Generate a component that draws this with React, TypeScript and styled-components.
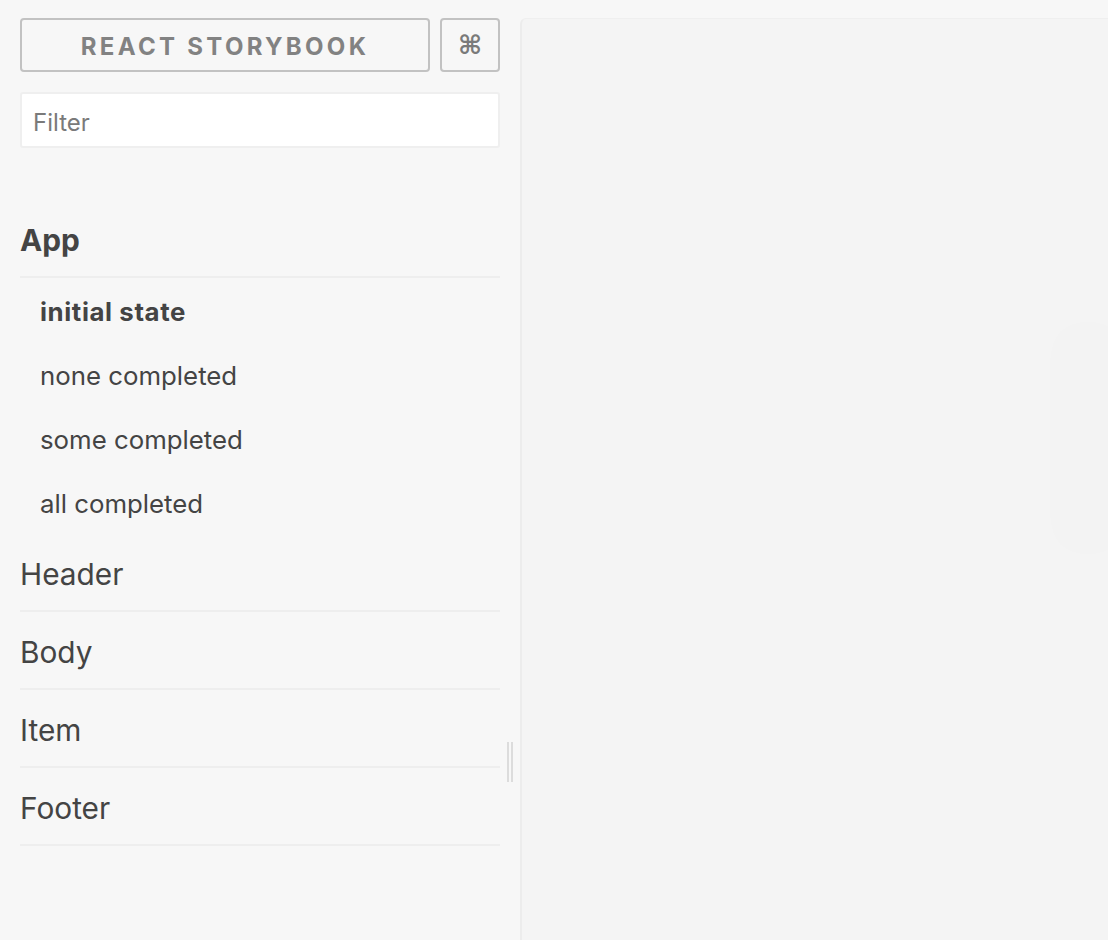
import React from "react";
import styled, { createGlobalStyle } from "styled-components";

const Global = createGlobalStyle`
  html, body { margin: 0; padding: 0; background: #f7f7f7; }
  body { font-family: Inter, "Noto Sans", "Liberation Sans", sans-serif; color: #444; }
  * { box-sizing: border-box; }
`;

const Page = styled.div`
  display: flex;
  height: 940px;
  overflow: hidden;
  background: #f7f7f7;
`;

const Sidebar = styled.aside`
  width: 500px;
  flex: none;
  padding: 18px 0 0 20px;
  display: flex;
  flex-direction: column;
`;

const HeaderRow = styled.div`
  display: flex;
  gap: 10px;
  height: 54px;
`;

const TitleButton = styled.a`
  flex: 1;
  display: flex;
  align-items: center;
  justify-content: center;
  padding-top: 2px;
  border: 2px solid #c2c2c2;
  border-radius: 4px;
  color: #828282;
  font-weight: 700;
  font-size: 24px;
  letter-spacing: 3.3px;
  text-transform: uppercase;
  text-decoration: none;
`;

const ShortcutButton = styled.button`
  width: 60px;
  flex: none;
  border: 2px solid #c2c2c2;
  border-radius: 4px;
  background: transparent;
  color: #7a7a7a;
  font-size: 26px;
  font-weight: 700;
  font-family: "DejaVu Sans", sans-serif;
  padding: 0;
`;

const FilterInput = styled.input`
  margin-top: 20px;
  height: 56px;
  width: 100%;
  border: 2px solid #efefef;
  border-radius: 3px;
  background: #fff;
  padding: 4px 12px 0 11px;
  font-family: inherit;
  font-size: 24px;
  color: #444;
  outline: none;
  &::placeholder { color: #7a7a7a; }
`;

const KindList = styled.ul`
  list-style: none;
  margin: 52px 0 0;
  padding: 0;
`;

const KindTitle = styled.div<{ $active?: boolean }>`
  height: 78px;
  display: flex;
  align-items: center;
  padding-top: 3px;
  border-bottom: 2px solid #eeeeee;
  font-size: 29.8px;
  font-weight: ${(p) => (p.$active ? 700 : 400)};
  color: #444;
`;

const StoryList = styled.ul`
  list-style: none;
  margin: 0;
  padding: 0;
`;

const Story = styled.li<{ $active?: boolean }>`
  height: 64px;
  display: flex;
  align-items: center;
  padding: 2px 0 0 20px;
  font-size: 25.8px;
  font-weight: ${(p) => (p.$active ? 700 : 400)};
  letter-spacing: ${(p) => (p.$active ? "0.6px" : "0")};
  color: #444;
`;

const Gutter = styled.div`
  width: 20px;
  flex: none;
  display: flex;
  justify-content: center;
  padding: 742px 0 0 0;
`;

const Resizer = styled.div`
  width: 6px;
  height: 40px;
  border-left: 2px solid #dcdcdc;
  border-right: 2px solid #dcdcdc;
`;

const Preview = styled.main`
  flex: 1;
  margin-top: 18px;
  background: #f4f4f4;
  border-left: 2px solid #ececec;
  border-top: 1px solid #efefef;
  border-radius: 6px 0 0 0;
  display: flex;
  justify-content: flex-end;
  align-items: flex-start;
  overflow: hidden;
  padding-top: 312px;
`;

const PreviewCard = styled.div`
  width: 56px;
  height: 214px;
  margin-right: -8px;
  background: #f3f3f3;
  box-shadow: 0 0 40px 10px rgba(0, 0, 0, 0.006);
`;

const kinds = [
  { name: "App", stories: ["initial state", "none completed", "some completed", "all completed"] },
  { name: "Header", stories: [] },
  { name: "Body", stories: [] },
  { name: "Item", stories: [] },
  { name: "Footer", stories: [] },
];

export default function App() {
  return (
    <Page>
      <Global />
      <Sidebar>
        <HeaderRow>
          <TitleButton href="#">React Storybook</TitleButton>
          <ShortcutButton>⌘</ShortcutButton>
        </HeaderRow>
        <FilterInput placeholder="Filter" />
        <KindList>
          {kinds.map((k, i) => (
            <li key={k.name}>
              <KindTitle $active={i === 0}>{k.name}</KindTitle>
              {k.stories.length > 0 && (
                <StoryList>
                  {k.stories.map((s, j) => (
                    <Story key={s} $active={j === 0}>{s}</Story>
                  ))}
                </StoryList>
              )}
            </li>
          ))}
        </KindList>
      </Sidebar>
      <Gutter>
        <Resizer />
      </Gutter>
      <Preview>
        <PreviewCard />
      </Preview>
    </Page>
  );
}
